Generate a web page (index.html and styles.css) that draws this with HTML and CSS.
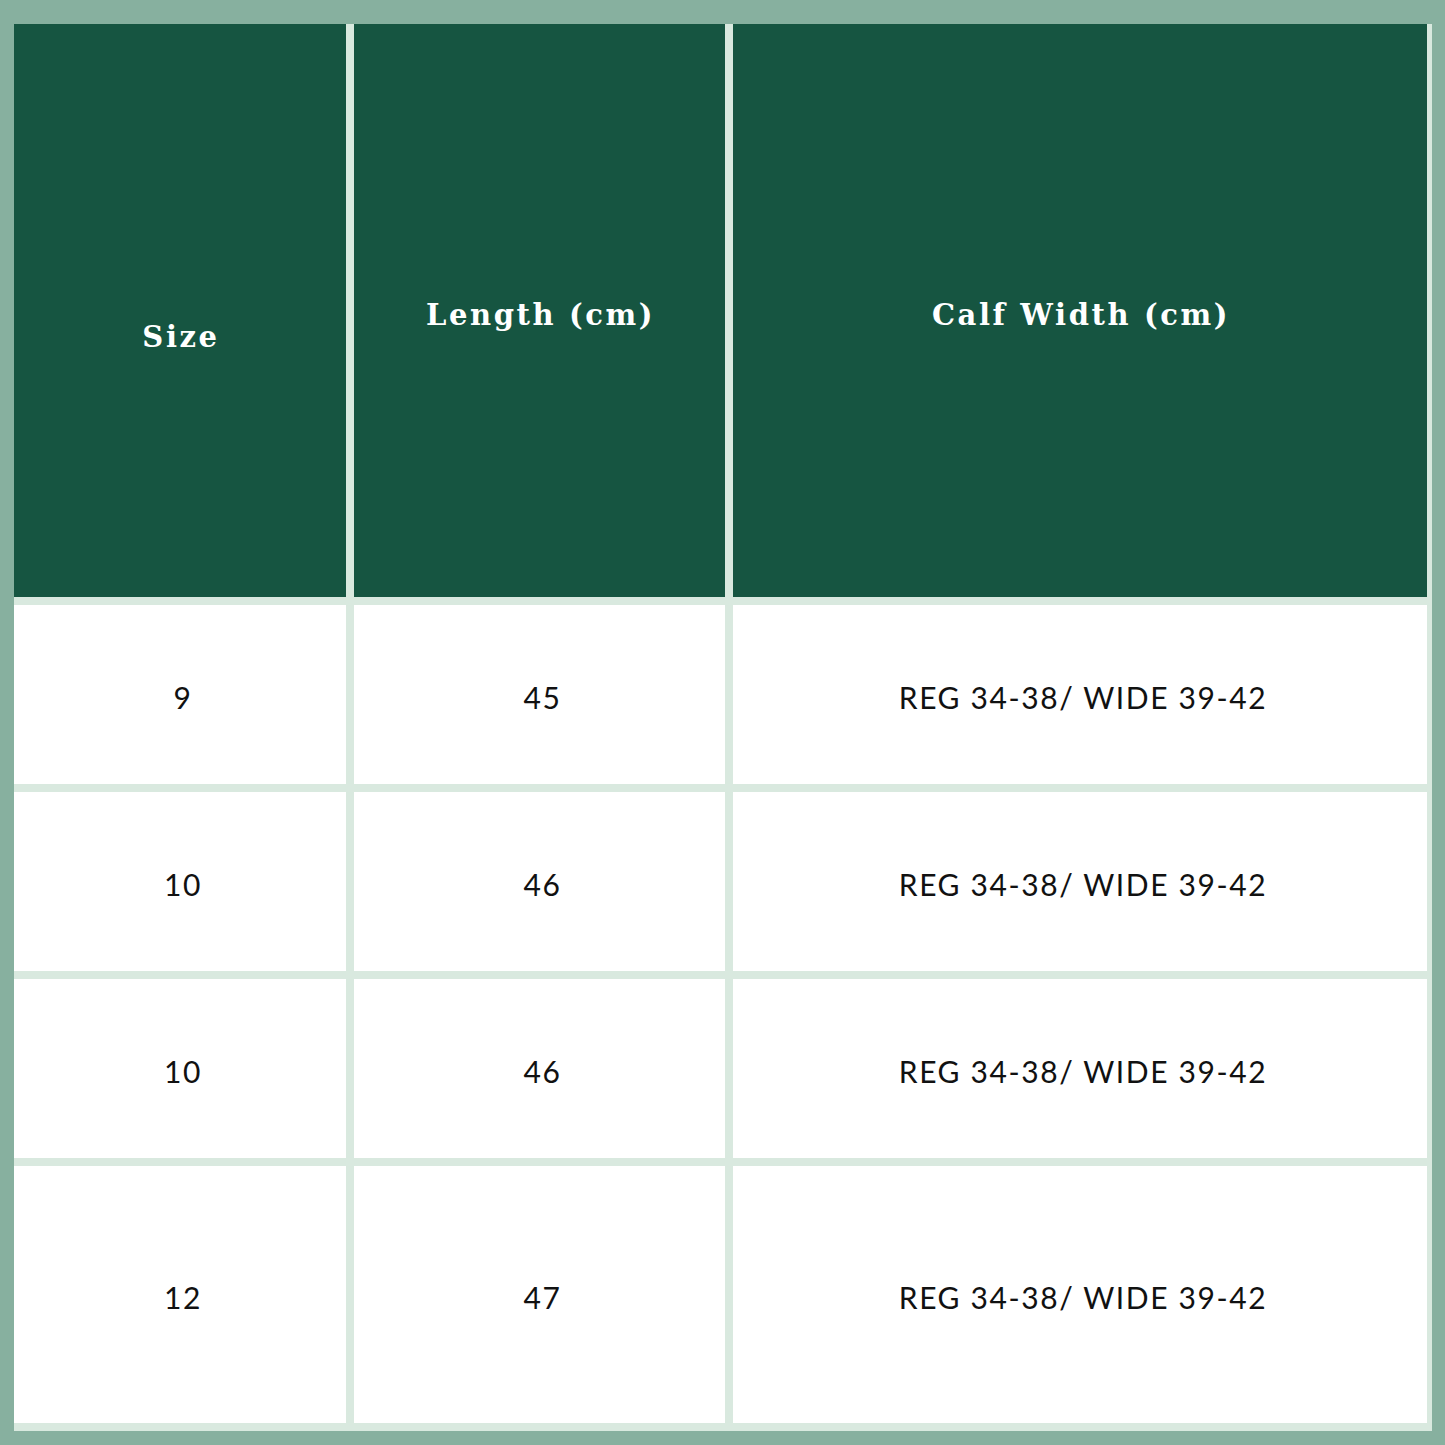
FILE: index.html
```html
<!DOCTYPE html>
<html>
<head>
<meta charset="utf-8">
<link rel="stylesheet" href="styles.css">
</head>
<body>
<div class="table">
  <div class="th th-size">Size</div>
  <div class="th">Length (cm)</div>
  <div class="th">Calf Width (cm)</div>

  <div class="td">9</div>
  <div class="td">45</div>
  <div class="td">REG 34-38/ WIDE 39-42</div>

  <div class="td">10</div>
  <div class="td">46</div>
  <div class="td">REG 34-38/ WIDE 39-42</div>

  <div class="td">10</div>
  <div class="td">46</div>
  <div class="td">REG 34-38/ WIDE 39-42</div>

  <div class="td">12</div>
  <div class="td">47</div>
  <div class="td">REG 34-38/ WIDE 39-42</div>
</div>
</body>
</html>
```
FILE: styles.css
```css
html, body {
  margin: 0;
  padding: 0;
  background: #87b09f;
  width: 1445px;
  height: 1445px;
  overflow: hidden;
}
.table {
  margin: 24px 0 0 14px;
  width: fit-content;
  display: grid;
  grid-template-columns: 332px 371px 694px;
  grid-template-rows: 573px 179px 179px 179px 257px;
  gap: 8px;
  padding: 0 5px 8px 0;
  background: #d9e9df;
}
.th {
  background: #165541;
  color: #ffffff;
  font-family: "DejaVu Serif", "Liberation Serif", serif;
  font-weight: bold;
  font-size: 29px;
  letter-spacing: 2.6px;
  display: flex;
  align-items: center;
  justify-content: center;
  padding: 9px 0 0 2px;
  box-sizing: border-box;
}
.th-size {
  padding-top: 52px;
}
.td {
  background: #ffffff;
  color: #111111;
  font-family: Lato, "Liberation Sans", sans-serif;
  font-size: 30px;
  letter-spacing: 1.6px;
  display: flex;
  align-items: center;
  justify-content: center;
  padding: 4px 0 0 6px;
  box-sizing: border-box;
}
```
